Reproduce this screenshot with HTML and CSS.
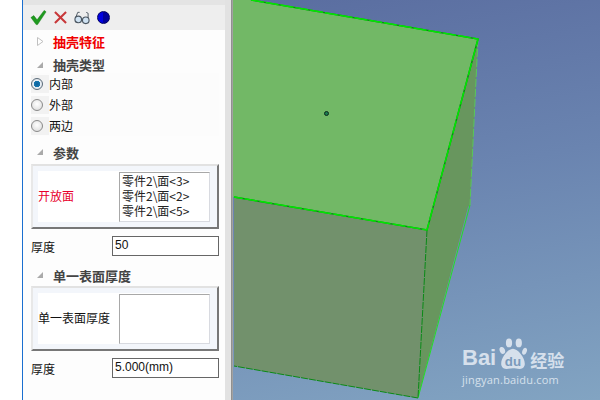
FILE: index.html
```html
<!DOCTYPE html>
<html>

<head>
  <meta charset="utf-8">
  <link rel="stylesheet" href="styles.css">
  <title>抽壳特征</title>
</head>

<body>
  <div class="window">
    <div class="margin"></div>
    <div class="panel">
      <div class="toolbar">
        <svg class="tool" width="17" height="17" viewBox="0 0 18 18">
          <path d="M1 9 L4 7 L7.500 11.500 L15 1.500 L17 3 L8 16.500 L6.500 16.500 Z" fill="#1f9a1f" stroke="#0e7a0e" stroke-width="0.500"/>
        </svg>
        <svg class="tool" width="13" height="13" viewBox="0 0 14 14">
          <path d="M1 1 L13 13 M13 1 L1 13" stroke="#c8383a" stroke-width="2.200"/>
        </svg>
        <svg class="tool" width="16" height="14" viewBox="0 0 17 14">
          <circle cx="4.500" cy="8.500" r="3.500" fill="#cfe2f2" stroke="#4a5560" stroke-width="1.200"/>
          <circle cx="12.500" cy="9.500" r="3.500" fill="#cfe2f2" stroke="#4a5560" stroke-width="1.200"/>
          <path d="M8 8 Q8.500 7 9 8 M2 6 L4 1 L6 1 M15 7 L15 2 L13 1" fill="none" stroke="#4a5560" stroke-width="1"/>
        </svg>
        <span class="tool half-dot"></span>
      </div>

      <div class="section-title title-red">
        <svg class="arrow-open" width="7" height="9" viewBox="0 0 7 9">
          <path d="M0.500 0.500 L6 4.500 L0.500 8.500 Z" fill="#fff" stroke="#c0c0c0"/>
        </svg>抽壳特征
      </div>
      <div class="section-title type-title"><span class="arrow-down"></span>抽壳类型</div>
      <div class="radio-row"><span class="radio-cell"><span class="radio checked"></span></span>内部</div>
      <div class="radio-row"><span class="radio-cell"><span class="radio"></span></span>外部</div>
      <div class="radio-row"><span class="radio-cell"><span class="radio"></span></span>两边</div>

      <div class="section-title param-title"><span class="arrow-down"></span>参数</div>
      <div class="group">
        <div class="group-inner">
          <span class="group-label label-red">开放面</span>
          <div class="listbox">
            <div>零件2\面&lt;3&gt;</div>
            <div>零件2\面&lt;2&gt;</div>
            <div>零件2\面&lt;5&gt;</div>
          </div>
        </div>
      </div>
      <div class="field">
        <span class="field-label">厚度</span>
        <div class="input">50</div>
      </div>

      <div class="section-title single-title"><span class="arrow-down"></span>单一表面厚度</div>
      <div class="group">
        <div class="group-inner">
          <span class="group-label">单一表面厚度</span>
          <div class="listbox"></div>
        </div>
      </div>
      <div class="field">
        <span class="field-label">厚度</span>
        <div class="input">5.000(mm)</div>
      </div>
    </div>
    <div class="splitter"></div>

    <div class="viewport">
      <svg class="scene" width="368" height="400" viewBox="232 0 368 400">
        <polygon points="477,39 426,230 417,398 467,207 469,205" fill="#68965e"/>
        <polygon points="233,197 426,230 417,398 233,366" fill="#72916c"/>
        <polygon points="232,-4 477,39 426,230 232,197" fill="#72b866"/>
        <path d="M477,39 L469,205" fill="none" stroke="#58c858" stroke-width="1" stroke-dasharray="8 2"/>
        <path d="M469,205 L417,398" fill="none" stroke="#22e022" stroke-width="1"/>
        <path d="M426,230 L417,398 L233,366" fill="none" stroke="#0a8a14" stroke-width="1" stroke-dasharray="7 1"/>
        <path d="M250,0 L477,39 L426,230 L233,197" fill="none" stroke="#0a8a14" stroke-width="1.500"/>
        <path d="M250,0 L477,39 L426,230 L233,197" fill="none" stroke="#00e800" stroke-width="1.500" stroke-dasharray="13 2"/>
        <circle cx="325.500" cy="113.500" r="2" fill="#1a7a50" stroke="#0b2a1c" stroke-width="1"/>
      </svg>
      <div class="watermark">
        <div class="logo-row">
          <span class="logo-bai">Bai</span>
          <svg class="paw" width="32" height="34" viewBox="0 0 36 38">
            <ellipse cx="6" cy="15" rx="3" ry="4" fill="#d6e0ec" transform="rotate(-20 6 15)"/>
            <ellipse cx="13.500" cy="6.500" rx="3.500" ry="5" fill="#d6e0ec"/>
            <ellipse cx="24.500" cy="6.500" rx="3.500" ry="5" fill="#d6e0ec"/>
            <ellipse cx="31" cy="16" rx="2.500" ry="4" fill="#d6e0ec" transform="rotate(20 31 16)"/>
            <path d="M18 13 C24 13 33 25 31 32 C29 38 22 35 18 35 C14 35 7 38 5 32 C3 25 12 13 18 13 Z" fill="#d6e0ec"/>
            <text x="18" y="32" text-anchor="middle" class="paw-text">du</text>
          </svg>
          <span class="logo-cn">经验</span>
        </div>
        <div class="logo-url">jingyan.baidu.com</div>
      </div>
    </div>
  </div>
</body>

</html>
```

FILE: styles.css
```css
html,
body {
  margin: 0;
  padding: 0;
}

body {
  width: 600px;
  height: 400px;
  overflow: hidden;
  background: #fff;
  font-family: "Noto Sans CJK SC", "Liberation Sans", sans-serif;
  font-size: 12px;
  color: #111;
}

.window {
  display: flex;
  height: 400px;
}

.margin {
  width: 22px;
  flex: none;
  background: #fff;
  border-right: 1px solid #1a6fd0;
}

.panel {
  width: 202px;
  flex: none;
  background: #fdfdfd;
  border-top: 5px solid #e4e4e4;
  box-sizing: border-box;
  height: 400px;
  padding: 0 6px 0 8px;
}

.splitter {
  width: 8px;
  flex: none;
  background: linear-gradient(to right, #e2e2e2, #e2e2e2 6px, #888 6px, #aaa);
}

.toolbar {
  display: flex;
  align-items: center;
  gap: 7px;
  height: 25px;
  margin: 0 -6px 0 -8px;
  padding-left: 7px;
  background: #eeeeee;
}

.half-dot {
  box-sizing: border-box;
  width: 13px;
  height: 13px;
  border-radius: 50%;
  background: linear-gradient(to right, #0000e0 50%, #00009a 50%);
  border: 0.500px solid #000060;
}

.section-title {
  display: flex;
  align-items: center;
  height: 18px;
  font-size: 13px;
  font-weight: bold;
  color: #444;
  white-space: nowrap;
}

.title-red {
  margin-top: 2px;
  color: #f00000;
}

.type-title {
  height: 17px;
  margin-top: 6px;
}

.param-title {
  margin-top: 7px;
  margin-bottom: 3px;
}

.single-title {
  margin-top: 10px;
  margin-bottom: 2px;
}

.arrow-open {
  flex: none;
  margin: 0 9px 0 6px;
}

.arrow-down {
  flex: none;
  width: 0;
  height: 0;
  margin: 0 10px 0 6px;
  border-style: solid;
  border-width: 0 0 6px 6px;
  border-color: transparent transparent #aaa transparent;
}

.radio-row {
  display: flex;
  align-items: center;
  height: 21px;
  background: #fcfcfc;
  line-height: 17px;
}

.radio-cell {
  display: flex;
  align-items: center;
  width: 18px;
  height: 18px;
  background: #f2f2f2;
}

.radio {
  box-sizing: border-box;
  width: 12px;
  height: 12px;
  border-radius: 50%;
  border: 1px solid #8a8a8a;
  background: radial-gradient(circle at 50% 40%, #fff, #d8d8d8);
}

.radio.checked {
  background: radial-gradient(circle, #0d5f9a 0, #1878b0 3px, #e8eef4 3.500px, #d8dee4);
  border-color: #5a6a78;
}

.group {
  box-sizing: border-box;
  height: 65px;
  width: 188px;
  padding: 5px 7px 5px 5px;
  background: #f3f6fb;
  border-top: 2px solid #e2e2e2;
  border-left: 2px solid #e8e8e8;
  border-right: 2px solid #777;
  border-bottom: 2px solid #777;
}

.group-inner {
  display: flex;
  align-items: center;
  height: 100%;
  background: #fff;
}

.group-label {
  width: 81px;
  flex: none;
  padding-bottom: 2px;
  white-space: nowrap;
}

.label-red {
  color: #e8002c;
}

.listbox {
  box-sizing: border-box;
  width: 91px;
  height: 50px;
  padding: 0 2px;
  background: #fff;
  border: 1px solid #d8dae0;
  border-top-color: #a8a8a8;
  border-left-color: #a8a8a8;
  line-height: 15px;
  white-space: nowrap;
  color: #222;
}

.field {
  display: flex;
  align-items: center;
  justify-content: space-between;
  width: 188px;
  height: 20px;
  margin-top: 7px;
}

.input {
  box-sizing: border-box;
  width: 107px;
  height: 20px;
  padding-left: 2px;
  border: 1px solid #666;
  background: #fff;
  line-height: 17px;
  font-family: "Liberation Sans", sans-serif;
}

.viewport {
  position: relative;
  flex: 1;
  height: 400px;
  overflow: hidden;
  background: linear-gradient(170deg, #5a6da0 0, #6a84b0 45%, #82a4c2 100%);
}

.scene {
  display: block;
}

.watermark {
  position: absolute;
  left: 229px;
  top: 337px;
  color: #d6e0ec;
}

.logo-row {
  display: flex;
  align-items: flex-end;
  height: 34px;
}

.logo-bai {
  font-family: "Liberation Sans", sans-serif;
  font-weight: bold;
  font-size: 22px;
  line-height: 26px;
}

.paw {
  margin: 0 1px;
}

.paw-text {
  font-family: "Liberation Sans", sans-serif;
  font-size: 15px;
  font-weight: bold;
  fill: #7a9abb;
}

.logo-cn {
  font-size: 17px;
  line-height: 23px;
  font-weight: bold;
}

.logo-url {
  font-family: "Open Sans", sans-serif;
  font-size: 11px;
  line-height: 14px;
  margin-top: 2px;
  letter-spacing: 0.200px;
  white-space: nowrap;
}
```
